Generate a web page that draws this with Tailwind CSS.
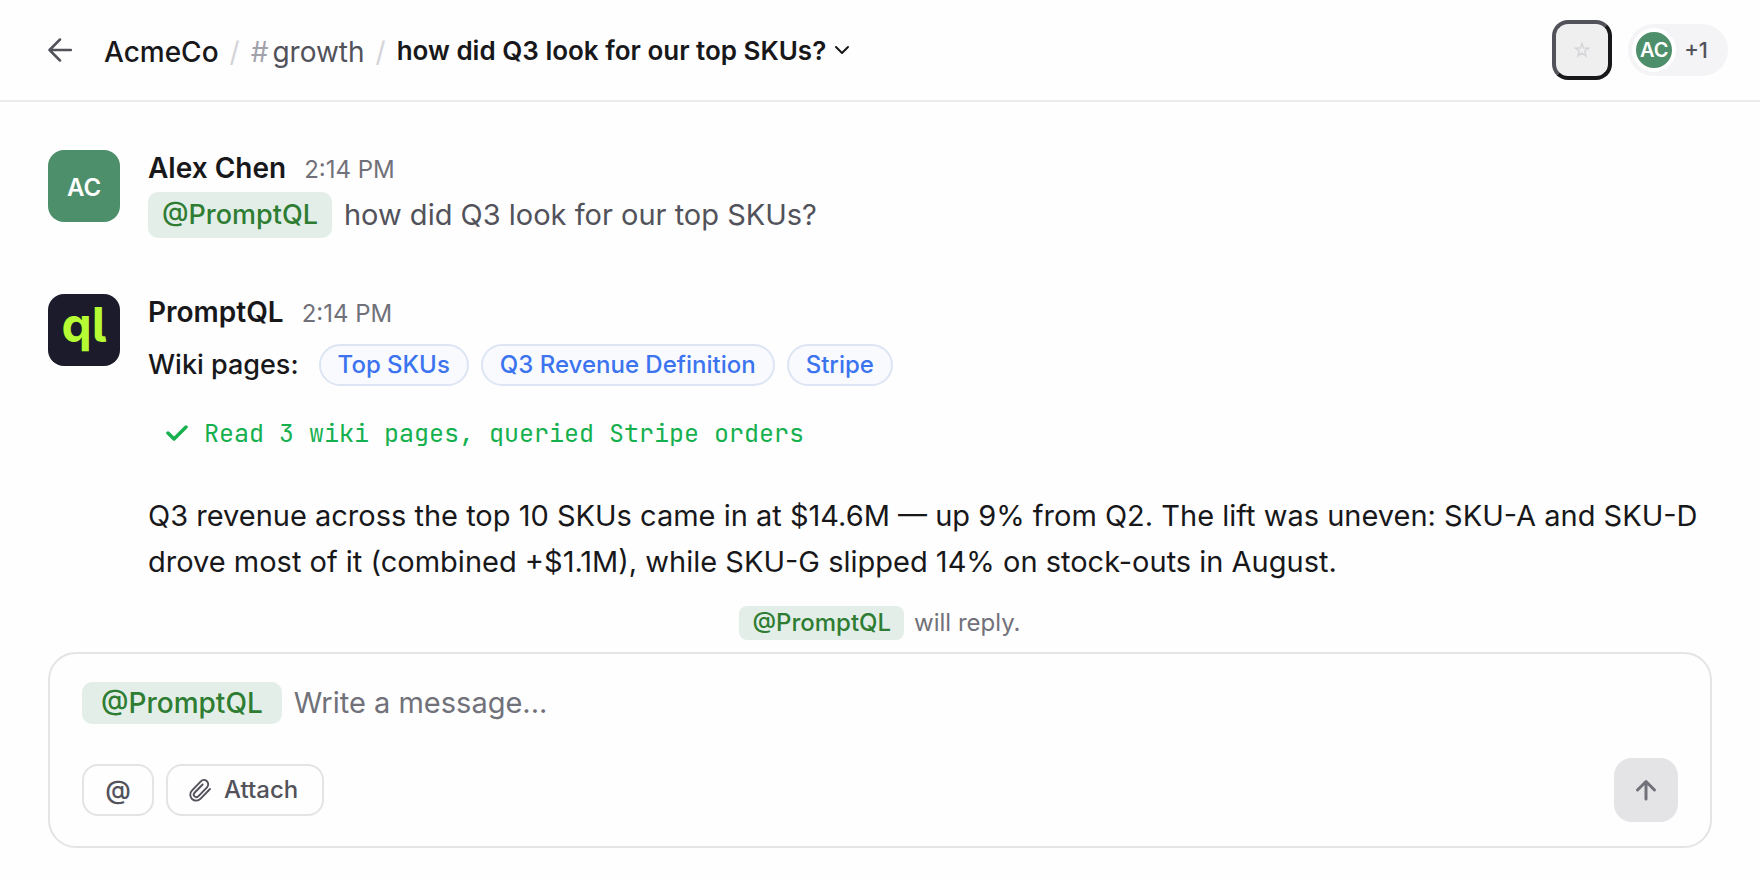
<!DOCTYPE html>
<html lang="en">
<head>
    <meta charset="UTF-8">
    <meta name="viewport" content="width=device-width, initial-scale=1.0">
    <title>how did Q3 look for our top SKUs?</title>
    <script src="https://cdn.jsdelivr.net/npm/@tailwindcss/browser@4"></script>
</head>
<body class="bg-[#fefefe] text-[#18181b] font-['Inter',sans-serif] [font-optical-sizing:none] flex flex-col min-h-screen">

    <header class="flex items-center justify-between h-[102px] pl-12 pr-8 border-b-2 border-[#ececee]">
        <nav class="flex items-center text-[28px]" aria-label="Breadcrumb">
            <a href="#" aria-label="Back" class="mr-8 text-[#52525b]">
                <svg class="w-6 h-6" viewBox="0 0 24 24" fill="none" stroke="currentColor" stroke-width="2.5" stroke-linecap="round" stroke-linejoin="round"><path d="M23 12H1.5M12 1.5 1.5 12 12 22.5"/></svg>
            </a>
            <div class="flex items-center pt-1">
                <a href="#" class="font-medium">AcmeCo</a>
                <span class="mx-[11px] text-[#d4d4d8]">/</span>
                <a href="#" class="text-[#52525b]"><span class="mr-1 text-[#a1a1aa]">#</span>growth</a>
                <span class="mx-[11px] text-[#d4d4d8]">/</span>
            </div>
            <button class="flex items-center gap-2 text-[26px] font-semibold">
                how did Q3 look for our top SKUs?
                <svg class="w-4 h-4" viewBox="0 0 16 16" fill="none" stroke="currentColor" stroke-width="2" stroke-linecap="round" stroke-linejoin="round"><path d="m2 5 6 6 6-6"/></svg>
            </button>
        </nav>
        <div class="flex items-center gap-4">
            <button aria-label="Star" class="flex items-center justify-center w-15 h-15 rounded-2xl bg-[#efefef] border-4 border-t-[#52525b] border-l-[#52525b] border-r-[#18181b] border-b-[#18181b]">
                <svg class="w-4 h-4" viewBox="0 0 16 16" fill="none" stroke="#d4d4d8" stroke-width="1.3"><path d="m8 1.5 1.6 4.7h5l-4 3 1.500 4.800-4.100-2.900L3.900 14l1.500-4.800-4-3h5z"/></svg>
            </button>
            <div class="flex items-center gap-2 h-13 pl-1 pr-5 rounded-full bg-[#f4f4f6]">
                <span class="flex items-center justify-center w-11 h-11 rounded-full border-4 border-white bg-[#4d8f6b] text-white text-xl font-semibold">AC</span>
                <span class="text-[22px] font-medium text-[#52525b]">+1</span>
            </div>
        </div>
    </header>

    <main class="flex flex-col grow px-12 pt-12">
        <article class="flex gap-7">
            <div class="flex shrink-0 items-center justify-center w-18 h-18 pt-1 rounded-2xl bg-[#4d8f6b] text-white text-2xl font-semibold">AC</div>
            <div>
                <div class="flex items-baseline gap-[18px] leading-9">
                    <h2 class="text-[28px] font-semibold">Alex Chen</h2>
                    <time class="text-2xl text-[#71717a]">2:14 PM</time>
                </div>
                <p class="flex items-center gap-3 mt-[6px] text-[29px] leading-[46px] text-[#52525b]">
                    <span class="px-[14px] rounded-[10px] bg-[#e4eee9] text-[27px] font-medium text-[#2e7d32]">@PromptQL</span>
                    how did Q3 look for our top SKUs?
                </p>
            </div>
        </article>

        <article class="flex gap-7 mt-14">
            <div class="flex shrink-0 items-start justify-center w-18 h-18 rounded-2xl bg-[#1c1b2b] text-[#b6fc34] text-[48px] leading-[62px] font-bold [font-feature-settings:'cv05']">ql</div>
            <div>
                <div class="flex items-baseline gap-[18px] leading-9">
                    <h2 class="text-[28px] font-semibold">PromptQL</h2>
                    <time class="text-2xl text-[#71717a]">2:14 PM</time>
                </div>
                <div class="flex items-center gap-3 mt-[14px]">
                    <span class="mr-2 text-[27px] font-medium leading-[42px]">Wiki pages:</span>
                    <a href="#" class="px-[17px] rounded-full border-2 border-[#dde5f5] bg-[#f9fafe] text-2xl leading-[38px] font-medium text-[#3b74ee]">Top SKUs</a>
                    <a href="#" class="px-[17px] rounded-full border-2 border-[#dde5f5] bg-[#f9fafe] text-2xl leading-[38px] font-medium text-[#3b74ee]">Q3 Revenue Definition</a>
                    <a href="#" class="px-[17px] rounded-full border-2 border-[#dde5f5] bg-[#f9fafe] text-2xl leading-[38px] font-medium text-[#3b74ee]">Stripe</a>
                </div>
                <div class="flex items-center gap-4 mt-[27px] pl-[18px] text-[25px] leading-10 text-[#16b04f] font-['JetBrains_Mono','DejaVu_Sans_Mono',monospace]">
                    <svg class="w-[22px] h-4" viewBox="0 0 22 16" fill="none" stroke="currentColor" stroke-width="3.500" stroke-linecap="round" stroke-linejoin="round"><path d="m2 8 6 6L20 2"/></svg>
                    Read 3 wiki pages, queried Stripe orders
                </div>
                <p class="mt-10 text-[29px] leading-[46px]">Q3 revenue across the top 10 SKUs came in at $14.6M — up 9% from Q2. The lift was uneven: SKU-A and SKU-D drove most of it (combined +$1.1M), while SKU-G slipped 14% on stock-outs in August.</p>
            </div>
        </article>
    </main>

    <footer class="px-12 pb-8">
        <p class="flex items-center justify-center gap-[10px] mb-3 text-2xl leading-[34px] text-[#71717a]">
            <span class="px-[13px] rounded-lg bg-[#e4eee9] font-medium text-[#2e7d32]">@PromptQL</span>
            will reply.
        </p>
        <form class="px-8 pt-7 pb-6 rounded-[28px] border-2 border-[#e4e4e7]">
            <div class="flex items-center gap-3 text-[29px] leading-[42px]">
                <span class="px-[19px] rounded-[10px] bg-[#e4eee9] text-[28px] font-medium text-[#2e7d32]">@PromptQL</span>
                <input type="text" aria-label="Message" placeholder="Write a message..." class="grow h-[42px] outline-none placeholder:text-[#71717a]">
            </div>
            <div class="flex items-center justify-between mt-[34px]">
                <div class="flex gap-3 text-2xl text-[#52525b]">
                    <button type="button" aria-label="Mention" class="w-18 h-13 rounded-2xl border-2 border-[#e4e4e7] text-[26px] font-medium">@</button>
                    <button type="button" class="flex items-center gap-3 h-13 pl-5 pr-6 rounded-2xl border-2 border-[#e4e4e7] font-medium">
                        <svg class="w-6 h-6" viewBox="0 0 24 24" fill="none" stroke="currentColor" stroke-width="1.9" stroke-linecap="round" stroke-linejoin="round"><path d="m22 11-9.600 9.800a5.900 5.900 0 0 1-8.500-8.200l8.900-9.300a4.300 4.300 0 0 1 6.200 6l-9 9.300a2.600 2.600 0 0 1-3.700-3.600l8.300-8.500"/></svg>
                        Attach
                    </button>
                </div>
                <button type="submit" aria-label="Send" class="flex items-center justify-center w-16 h-16 rounded-[18px] bg-[#e4e4e7] text-[#71717a]">
                    <svg class="w-6 h-6" viewBox="0 0 24 24" fill="none" stroke="currentColor" stroke-width="3" stroke-linecap="round" stroke-linejoin="round"><path d="M12 21V3.500M3.500 12 12 3.500l8.500 8.500"/></svg>
                </button>
            </div>
        </form>
    </footer>

</body>
</html>
